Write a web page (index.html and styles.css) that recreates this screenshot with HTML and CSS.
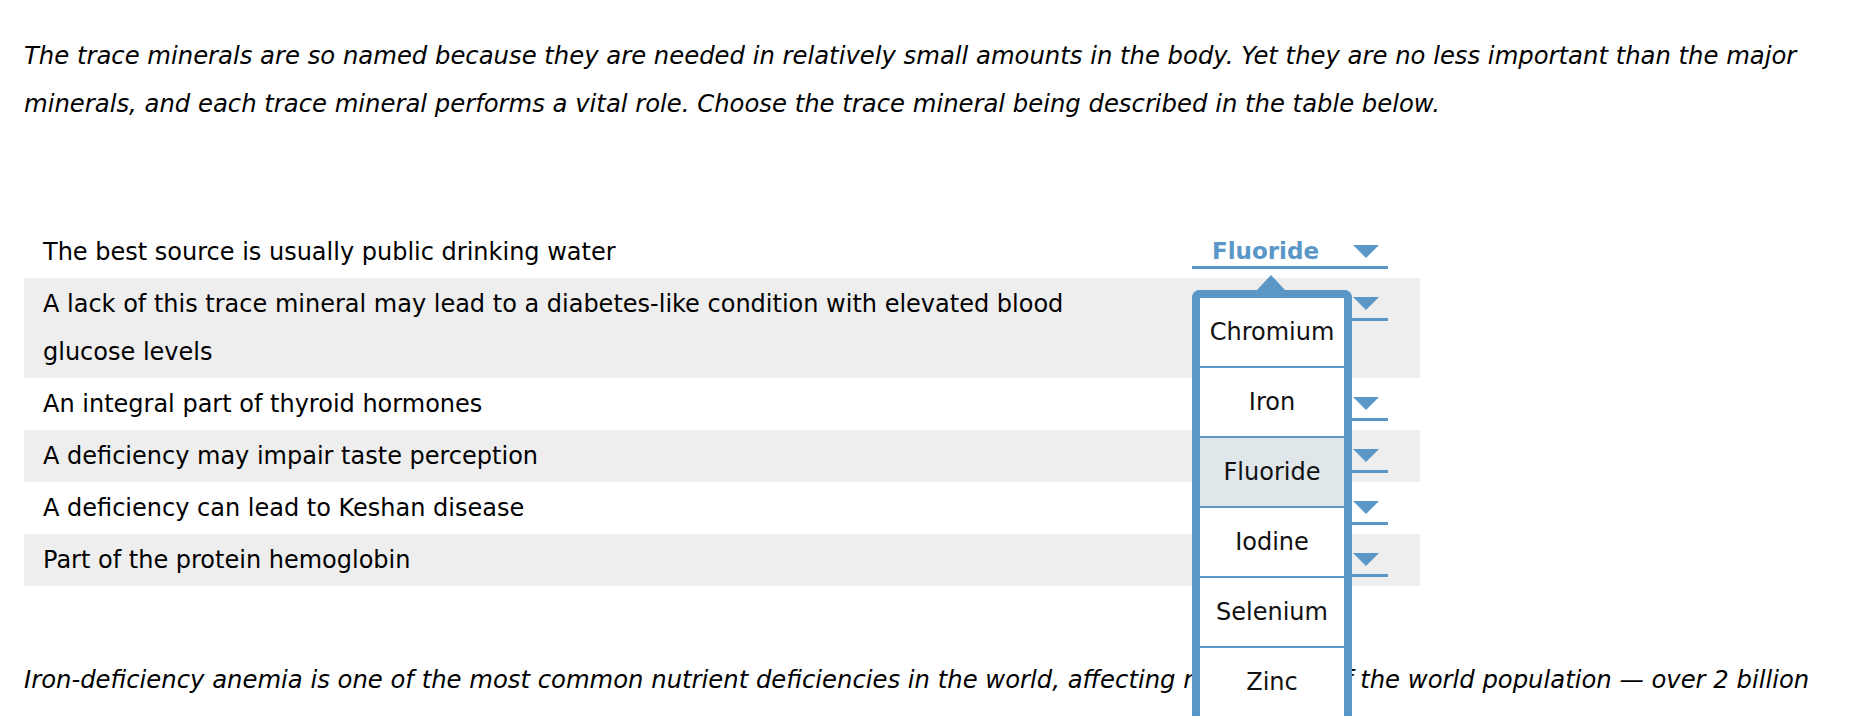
FILE: index.html
```html
<!DOCTYPE html>
<html lang="en">
<head>
<meta charset="utf-8">
<title>Trace minerals</title>
<link rel="stylesheet" href="styles.css">
</head>
<body>
<main class="page">
  <p class="intro">The trace minerals are so named because they are needed in relatively small amounts in the body. Yet they are no less important than the major minerals, and each trace mineral performs a vital role. Choose the trace mineral being described in the table below.</p>

  <table class="quiz">
    <tbody>
      <tr class="row">
        <td class="desc">The best source is usually public drinking water</td>
        <td class="pick">
          <div class="select open">
            <span class="value">Fluoride</span>
            <span class="arrow"></span>
            <div class="menu">
              <div class="menu-item">Chromium</div>
              <div class="menu-item">Iron</div>
              <div class="menu-item active">Fluoride</div>
              <div class="menu-item">Iodine</div>
              <div class="menu-item">Selenium</div>
              <div class="menu-item">Zinc</div>
            </div>
          </div>
        </td>
      </tr>
      <tr class="row alt">
        <td class="desc">A lack of this trace mineral may lead to a diabetes-like condition with elevated blood glucose levels</td>
        <td class="pick"><div class="select"><span class="value"></span><span class="arrow"></span></div></td>
      </tr>
      <tr class="row">
        <td class="desc">An integral part of thyroid hormones</td>
        <td class="pick"><div class="select"><span class="value"></span><span class="arrow"></span></div></td>
      </tr>
      <tr class="row alt">
        <td class="desc">A deficiency may impair taste perception</td>
        <td class="pick"><div class="select"><span class="value"></span><span class="arrow"></span></div></td>
      </tr>
      <tr class="row">
        <td class="desc">A deficiency can lead to Keshan disease</td>
        <td class="pick"><div class="select"><span class="value"></span><span class="arrow"></span></div></td>
      </tr>
      <tr class="row alt">
        <td class="desc">Part of the protein hemoglobin</td>
        <td class="pick"><div class="select"><span class="value"></span><span class="arrow"></span></div></td>
      </tr>
    </tbody>
  </table>

  <p class="outro">Iron-deficiency anemia is one of the most common nutrient deficiencies in the world, affecting nearly 30% of the world population — over 2 billion people.</p>
</main>
</body>
</html>
```

FILE: styles.css
```css
html, body {
  margin: 0;
  padding: 0;
  height: 716px;
  overflow: hidden;
  background: #ffffff;
}

body {
  font-family: "DejaVu Sans", Verdana, sans-serif;
  font-size: 24px;
  color: #000000;
}

.page {
  width: 1820px;
  padding: 0 20px 0 24px;
}

.intro,
.outro {
  font-style: italic;
  font-size: 24.3px;
  line-height: 48px;
  margin: 0;
}

.intro {
  padding-top: 32px;
}

.quiz {
  margin-top: 98px;
  width: 1396px;
  border-collapse: collapse;
  border-spacing: 0;
}

.row.alt {
  background: #eeeeee;
}

.desc {
  width: 1168px;
  box-sizing: border-box;
  padding: 2px 40px 2px 19px;
  line-height: 48px;
  vertical-align: top;
}

.pick {
  padding: 0;
  vertical-align: top;
}

.select {
  position: relative;
  width: 196px;
  height: 43px;
  box-sizing: border-box;
  padding: 10px 9px 0 20px;
  border-bottom: 3px solid #5a96c6;
  display: flex;
  align-items: center;
}

.value {
  flex: 1;
  font-weight: bold;
  font-size: 23px;
  color: #5a96c6;
  line-height: 30px;
  height: 30px;
  white-space: nowrap;
}

.arrow {
  width: 0;
  height: 0;
  border-left: 13.5px solid transparent;
  border-right: 13.5px solid transparent;
  border-top: 13px solid #5a96c6;
}

.menu {
  position: absolute;
  left: 0;
  top: 64px;
  width: 160px;
  box-sizing: border-box;
  border: 8px solid #5a96c6;
  border-bottom: none;
  border-radius: 8px 8px 0 0;
  background: #ffffff;
  z-index: 10;
}

.menu::before {
  content: "";
  position: absolute;
  left: 57px;
  top: -23px;
  border-left: 14px solid transparent;
  border-right: 14px solid transparent;
  border-bottom: 15px solid #5a96c6;
}

.menu-item {
  height: 68px;
  line-height: 68px;
  text-align: center;
  color: #111111;
  border-bottom: 2px solid #5a96c6;
  background: #ffffff;
}

.menu-item.active {
  background: #dfe7ea;
}

.outro {
  margin-top: 70px;
}
```
